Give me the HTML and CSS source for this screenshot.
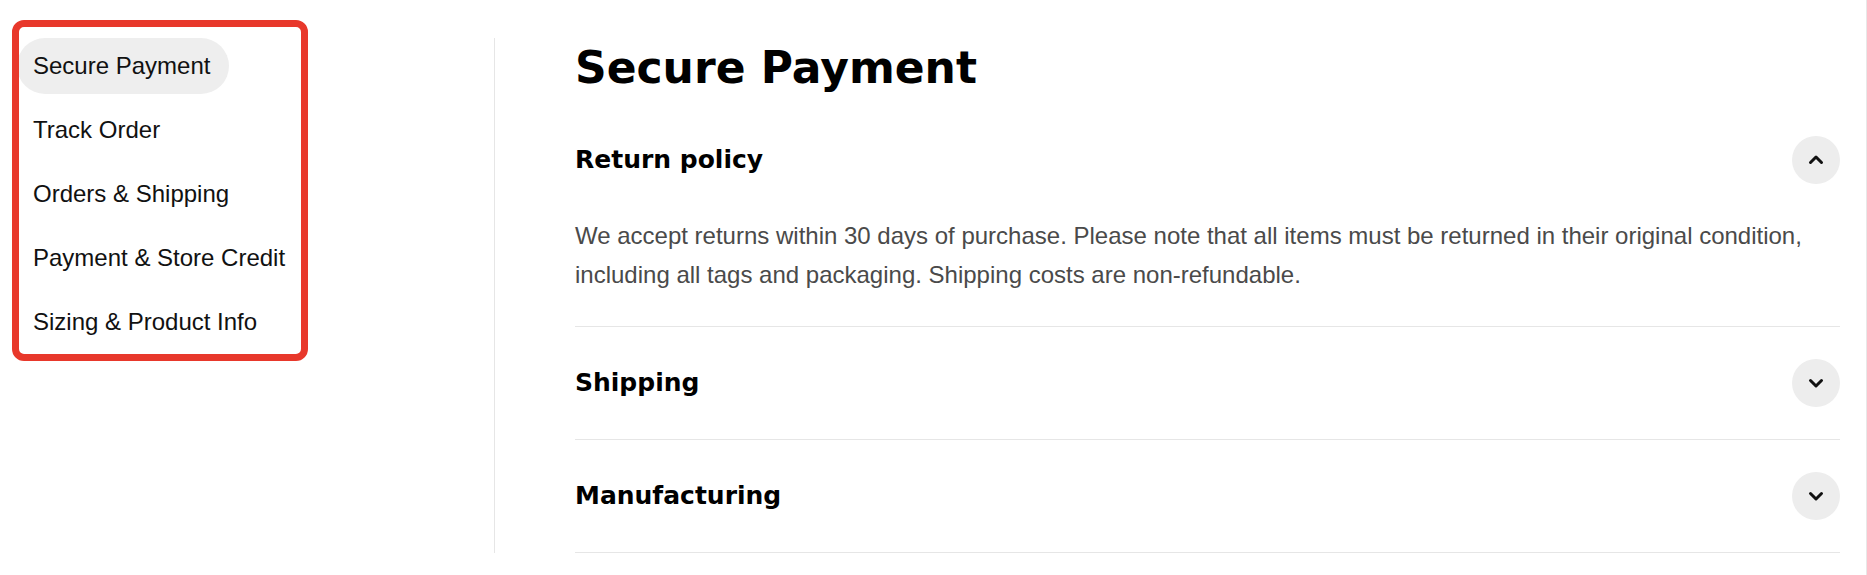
FILE: index.html
```html
<!DOCTYPE html>
<html lang="en">
<head>
<meta charset="utf-8">
<title>Secure Payment</title>
<link rel="stylesheet" href="styles.css">
</head>
<body>
<div class="page">
  <aside class="sidebar">
    <nav class="side-nav">
      <ul class="nav-list">
        <li class="nav-item active">Secure Payment</li>
        <li class="nav-item">Track Order</li>
        <li class="nav-item">Orders &amp; Shipping</li>
        <li class="nav-item">Payment &amp; Store Credit</li>
        <li class="nav-item">Sizing &amp; Product Info</li>
      </ul>
    </nav>
  </aside>
  <main class="content">
    <h1 class="page-title">Secure Payment</h1>
    <div class="accordion">
      <section class="acc-item open">
        <div class="acc-header">
          <h2 class="acc-title">Return policy</h2>
          <span class="acc-toggle">
            <svg width="18" height="18" viewBox="0 0 18 18"><polyline points="3.5,11.5 9,6 14.5,11.5" fill="none" stroke="#111" stroke-width="3" stroke-linecap="round" stroke-linejoin="round"/></svg>
          </span>
        </div>
        <div class="acc-panel">
          <p class="acc-text">We accept returns within 30 days of purchase. Please note that all items must be returned in their original condition, including all tags and packaging. Shipping costs are non-refundable.</p>
        </div>
      </section>
      <section class="acc-item">
        <div class="acc-header">
          <h2 class="acc-title">Shipping</h2>
          <span class="acc-toggle">
            <svg width="18" height="18" viewBox="0 0 18 18"><polyline points="3.5,6.5 9,12 14.5,6.5" fill="none" stroke="#111" stroke-width="3" stroke-linecap="round" stroke-linejoin="round"/></svg>
          </span>
        </div>
      </section>
      <section class="acc-item">
        <div class="acc-header">
          <h2 class="acc-title">Manufacturing</h2>
          <span class="acc-toggle">
            <svg width="18" height="18" viewBox="0 0 18 18"><polyline points="3.5,6.5 9,12 14.5,6.5" fill="none" stroke="#111" stroke-width="3" stroke-linecap="round" stroke-linejoin="round"/></svg>
          </span>
        </div>
      </section>
    </div>
  </main>
</div>
</body>
</html>
```

FILE: styles.css
```css
* { box-sizing: border-box; }

html, body {
  margin: 0;
  padding: 0;
  background: #ffffff;
}

body {
  font-family: "Liberation Sans", Arial, sans-serif;
  color: #111111;
}

.page {
  display: flex;
  align-items: flex-start;
  padding: 38px 26px 0 17px;
  min-height: 100vh;
  border-right: 1px solid #e8e8e8;
}

.sidebar {
  flex: 0 0 477px;
}

.side-nav {
  position: relative;
  width: 291px;
}

.side-nav::after {
  content: "";
  position: absolute;
  top: -18px;
  left: -5px;
  right: 0;
  bottom: -11px;
  border: 7px solid #e8382b;
  border-radius: 12px;
  pointer-events: none;
}

.nav-list {
  list-style: none;
  margin: 0;
  padding: 0;
  display: flex;
  flex-direction: column;
  align-items: flex-start;
  gap: 8px;
}

.nav-item {
  font-size: 24px;
  line-height: 24px;
  padding: 16px 19px 16px 16px;
  border-radius: 28px;
  color: #111111;
  white-space: nowrap;
}

.nav-item.active {
  background: #eeeeee;
}

.content {
  flex: 1 1 auto;
  border-left: 1px solid #e6e6e6;
  padding-left: 80px;
}

.page-title {
  font-family: "DejaVu Sans", sans-serif;
  font-weight: bold;
  font-size: 44px;
  line-height: 1.2;
  margin: 4px 0 9px;
  color: #000000;
}

.accordion {
  display: flex;
  flex-direction: column;
}

.acc-item {
  border-bottom: 1px solid #e6e6e6;
}

.acc-header {
  display: flex;
  align-items: center;
  justify-content: space-between;
  padding: 32px 0;
}

.acc-title {
  font-family: "DejaVu Sans", sans-serif;
  font-weight: bold;
  font-size: 25px;
  line-height: 30px;
  margin: 0;
  color: #000000;
}

.acc-toggle {
  width: 48px;
  height: 48px;
  border-radius: 50%;
  background: #ededed;
  display: flex;
  align-items: center;
  justify-content: center;
}

.acc-panel {
  padding-bottom: 32px;
}

.acc-text {
  margin: 0;
  font-size: 24px;
  line-height: 39px;
  color: #4a4a4a;
}
```
